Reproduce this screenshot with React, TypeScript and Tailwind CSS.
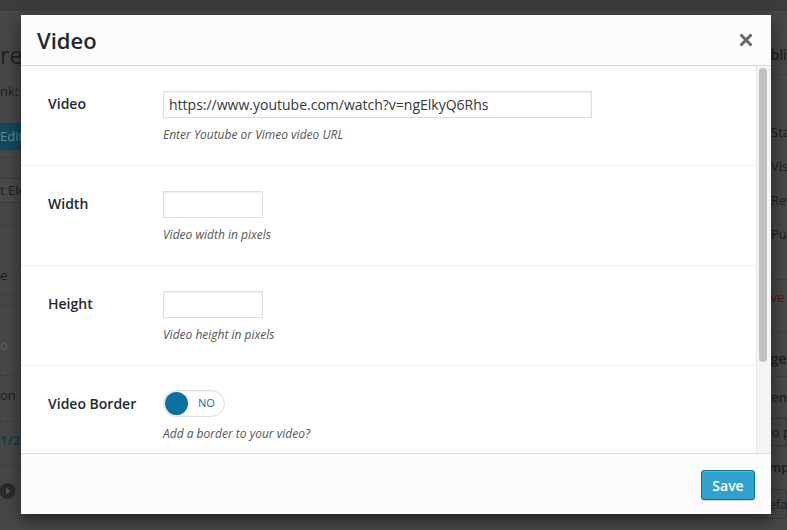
const fields = [
  { label: "Video", value: "https://www.youtube.com/watch?v=ngElkyQ6Rhs", wide: true, help: "Enter Youtube or Vimeo video URL" },
  { label: "Width", value: "", wide: false, help: "Video width in pixels" },
  { label: "Height", value: "", wide: false, help: "Video height in pixels" },
];

function CloseIcon() {
  return (
    <svg width="12" height="12" viewBox="0 0 12 12">
      <path d="M1.5 1.5 L10.5 10.5 M10.5 1.5 L1.5 10.5" stroke="#666" strokeWidth="3" strokeLinecap="square" />
    </svg>
  );
}

function Backdrop() {
  return (
    <div className="flex flex-col w-full h-full text-[#1e1e1e]">
      <div className="h-[11px] bg-[#3c3c3c]" />
      <div className="flex flex-1">
        {/* page content (mostly under the modal) */}
        <div className="w-[745px] shrink-0 flex flex-col whitespace-nowrap text-[13px]">
          <div className="h-[24px]" />
          <div className="h-[40px] leading-[40px] text-[23px]">re</div>
          <div className="h-[32px] leading-[32px]">nk:</div>
          <div className="h-[16px]" />
          <div className="h-[27px] w-[60px] leading-[27px] bg-[#11495c] text-[#5f8fa0]">Edit</div>
          <div className="h-[8px] border-b border-[#3e3e3e]" />
          <div className="h-[20px]" />
          <div className="h-[25px] leading-[23px] border-y border-[#3b3b3b] bg-[#4a4a4a]">t Ele</div>
          <div className="h-[23px] border-b border-[#3e3e3e]" />
          <div className="h-[39px]" />
          <div className="h-[20px] leading-[20px]">e</div>
          <div className="h-[10px] border-b border-[#3e3e3e]" />
          <div className="h-[11px] border-b border-[#3e3e3e]" />
          <div className="h-[30px]" />
          <div className="h-[18px] leading-[18px] text-[#5e5e5e]">o</div>
          <div className="h-[22px] border-b border-dashed border-[#3a3a3a]" />
          <div className="h-[38px] leading-[38px]">on</div>
          <div className="h-[8px] border-b border-dashed border-[#3a3a3a]" />
          <div className="h-[36px] leading-[36px] font-semibold text-[#0f3a4f]">1/2</div>
          <div className="h-[8px] border-b border-[#3e3e3e]" />
          <div className="h-[50px] flex items-center">
            <svg width="16" height="16" viewBox="0 0 16 16">
              <circle cx="7.5" cy="8" r="8" fill="#2a2a2a" />
              <path d="M6 4.5 L10.5 8 L6 11.5 Z" fill="#555" />
            </svg>
          </div>
        </div>
        {/* sidebar */}
        <div className="flex-1 min-w-0 overflow-hidden flex flex-col whitespace-nowrap text-[13px]">
          <div className="h-[24px]" />
          <div className="h-[40px] leading-[40px] pl-[8px] text-[14px] font-semibold border-b border-[#3e3e3e]">Publish</div>
          <div className="h-[40px]" />
          <div className="h-[34px] leading-[34px] pl-[26px]">Status</div>
          <div className="h-[34px] leading-[34px] pl-[26px]">Visibility</div>
          <div className="h-[34px] leading-[34px] pl-[26px]">Revisions</div>
          <div className="h-[34px] leading-[34px] pl-[26px]">Publish</div>
          <div className="h-[29px] border-b border-[#3e3e3e]" />
          <div className="h-[34px] leading-[34px] pl-[6px] text-[#5a1515]">Move to Trash</div>
          <div className="h-[18px] border-b border-[#3e3e3e]" />
          <div className="h-[10px]" />
          <div className="h-[35px] leading-[34px] pl-[9px] text-[14px] font-semibold border-b border-[#3e3e3e]">Page Attributes</div>
          <div className="h-[10px]" />
          <div className="h-[20px] leading-[20px] pl-[5px] font-semibold">Parent</div>
          <div className="h-[11px]" />
          <div className="h-[28px] leading-[26px] ml-[7px] pl-[9px] border border-[#3b3b3b]">No parent</div>
          <div className="h-[11px]" />
          <div className="h-[20px] leading-[20px] pl-[9px] font-semibold">Template</div>
          <div className="h-[12px]" />
          <div className="h-[30px] leading-[28px] ml-[5px] pl-[8px] border border-[#3b3b3b] rounded-[3px]">Default</div>
        </div>
      </div>
    </div>
  );
}

export default function App() {
  return (
    <div className="relative w-[787px] h-[530px] overflow-hidden bg-[#474747] font-['Open_Sans',sans-serif]">
      <Backdrop />

      <div className="absolute left-[21px] top-[15px] w-[750px] h-[499px] bg-white flex flex-col shadow-[0_5px_15px_rgba(0,0,0,0.55)]">
        {/* header */}
        <div className="h-[51px] shrink-0 flex items-center justify-between pl-[16px] pr-[19px] bg-[#fcfcfc] border-b border-[#dddddd]">
          <h1 className="text-[22px] font-semibold text-[#23282d]">Video</h1>
          <CloseIcon />
        </div>

        {/* body */}
        <div className="flex flex-1 min-h-0">
          <div className="flex-1 overflow-hidden">
            {fields.map((f) => (
              <div key={f.label} className="h-[100px] flex pl-[27px] pt-[25px] border-b border-[#eeeeee]">
                <div className="w-[115px] h-[25px] flex items-center text-[14px] font-semibold text-[#23282d]">{f.label}</div>
                <div className="flex flex-col">
                  <input
                    readOnly
                    value={f.value}
                    className={`${f.wide ? "w-[429px]" : "w-[100px]"} h-[27px] pl-[5px] border border-[#dddddd] shadow-[inset_0_1px_2px_rgba(0,0,0,0.07)] text-[14px] text-[#32373c] outline-none`}
                  />
                  <p className="mt-[8px] text-[12px] leading-[18px] italic text-[#555555]">{f.help}</p>
                </div>
              </div>
            ))}
            <div className="h-[100px] flex pl-[27px] pt-[24px]">
              <div className="w-[115px] h-[26px] flex items-center text-[14px] font-semibold text-[#23282d]">Video Border</div>
              <div className="flex flex-col">
                <div className="w-[62px] h-[27px] rounded-full border border-[#dddddd] bg-white flex items-center pl-[1px] shadow-[inset_0_1px_1px_rgba(0,0,0,0.04)]">
                  <span className="w-[23px] h-[23px] rounded-full bg-[#0a71a0]" />
                  <span className="ml-[10px] text-[11px] text-[#0a71a0]">NO</span>
                </div>
                <p className="mt-[8px] text-[12px] leading-[18px] italic text-[#555555]">Add a border to your video?</p>
              </div>
            </div>
          </div>
          {/* scrollbar */}
          <div className="w-[15px] shrink-0 bg-[#f4f4f4] border-l border-[#e8e8e8] pt-[2px] pl-[2px]">
            <div className="w-[8px] h-[294px] rounded-full bg-[#c1c1c1]" />
          </div>
        </div>

        {/* footer */}
        <div className="h-[61px] shrink-0 flex justify-end items-start pt-[16px] pr-[16px] bg-[#fcfcfc] border-t border-[#dddddd]">
          <button className="w-[54px] h-[30px] rounded-[3px] bg-[#2ea2cc] border border-[#0074a2] text-white text-[14px] font-semibold shadow-[inset_0_1px_0_rgba(120,200,230,0.5),0_1px_0_rgba(0,0,0,0.15)]">
            Save
          </button>
        </div>
      </div>
    </div>
  );
}
